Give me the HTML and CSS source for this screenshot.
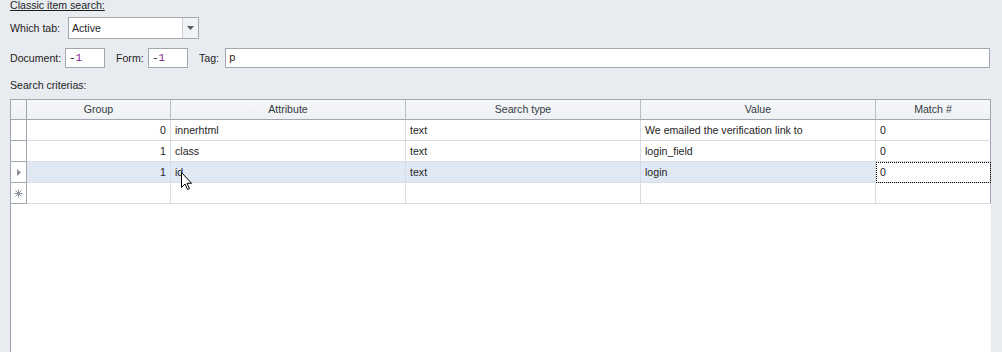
FILE: index.html
```html
<!DOCTYPE html>
<html>
<head>
<meta charset="utf-8">
<link rel="stylesheet" href="styles.css">
</head>
<body>
<div class="page">
  <div class="title">Classic item search:</div>
  <div class="row row-tab">
    <span class="lbl lbl-tab">Which tab:</span>
    <div class="combo">
      <span class="combo-text">Active</span>
      <span class="combo-btn"><svg width="7" height="4" viewBox="0 0 7 4"><path d="M0 0H7L3.5 4Z" fill="#555b63"/></svg></span>
    </div>
  </div>
  <div class="row row-fields">
    <span class="lbl lbl-doc">Document:</span>
    <div class="field f-doc"><span class="mdash">-</span><span class="num">1</span></div>
    <span class="lbl lbl-form">Form:</span>
    <div class="field f-form"><span class="mdash">-</span><span class="num">1</span></div>
    <span class="lbl lbl-tag">Tag:</span>
    <div class="field f-tag"><span class="tagv">p</span></div>
  </div>
  <div class="section">Search criterias:</div>
  <div class="grid">
    <div class="gr head">
      <div class="c ind"></div>
      <div class="c hc">Group</div>
      <div class="c hc">Attribute</div>
      <div class="c hc">Search type</div>
      <div class="c hc">Value</div>
      <div class="c hc last">Match #</div>
    </div>
    <div class="gr">
      <div class="c ind"></div>
      <div class="c num-c">0</div>
      <div class="c">innerhtml</div>
      <div class="c">text</div>
      <div class="c">We emailed the verification link to</div>
      <div class="c last">0</div>
    </div>
    <div class="gr">
      <div class="c ind"></div>
      <div class="c num-c">1</div>
      <div class="c">class</div>
      <div class="c">text</div>
      <div class="c">login_field</div>
      <div class="c last">0</div>
    </div>
    <div class="gr sel">
      <div class="c ind"><svg width="4" height="7" viewBox="0 0 4 7"><path d="M0 0L4 3.5L0 7Z" fill="#8c929b"/></svg></div>
      <div class="c num-c">1</div>
      <div class="c">id</div>
      <div class="c">text</div>
      <div class="c">login</div>
      <div class="c last focus">0</div>
    </div>
    <div class="gr">
      <div class="c ind"><svg width="9" height="9" viewBox="0 0 9 9"><path d="M4.5 0.5V8.5M0.5 4.5H8.5M1.5 1.5L7.5 7.5M7.5 1.5L1.5 7.5" stroke="#8c929b" stroke-width="1" fill="none"/></svg></div>
      <div class="c"></div>
      <div class="c"></div>
      <div class="c"></div>
      <div class="c"></div>
      <div class="c last"></div>
    </div>
    <svg class="cursor" width="12" height="19" viewBox="0 0 12 19"><path d="M0.5 0.5V15.5L4 12L6.5 17.5L8.5 16.6L6 11.3H10.5Z" fill="#fff" stroke="#000" stroke-width="1" stroke-linejoin="miter"/></svg>
  </div>
</div>
</body>
</html>
```

FILE: styles.css
```css
html, body {
  margin: 0;
  padding: 0;
  background: #e8ebf0;
  overflow: hidden;
}
body {
  font-family: "Liberation Sans", Arial, sans-serif;
  font-size: 10.6px;
  color: #1e1e1e;
  width: 1002px;
  height: 352px;
}
.page {
  padding: 0 0 0 10px;
}
.title {
  height: 12px;
  line-height: 12px;
  text-decoration: underline;
  margin-top: -1px;
}
.row {
  display: flex;
  align-items: center;
}
.row-tab {
  margin-top: 6px;
  height: 22px;
}
.lbl {
  white-space: nowrap;
  flex: 0 0 auto;
}
.lbl-tab { width: 58px; }
.combo {
  width: 129px;
  height: 20px;
  border: 1px solid #a3a7ae;
  background: #fff;
  display: flex;
  align-items: center;
}
.combo-text {
  flex: 1;
  padding-left: 3px;
}
.combo-btn {
  width: 15px;
  height: 20px;
  border-left: 1px solid #c9ccd1;
  background: #f2f3f5;
  display: flex;
  align-items: center;
  justify-content: center;
}
.row-fields {
  margin-top: 9px;
  height: 20px;
}
.field {
  flex: 0 0 auto;
  height: 18px;
  border: 1px solid #a3a7ae;
  background: #fff;
  font-family: "Liberation Mono", "Courier New", monospace;
  font-size: 11px;
  line-height: 18px;
  padding-left: 3px;
  box-sizing: content-box;
}
.lbl-doc { width: 55px; }
.f-doc { width: 35px; }
.lbl-form { margin-left: 11px; width: 32px; }
.f-form { width: 35px; }
.lbl-tag { margin-left: 11px; width: 26px; }
.f-tag { width: 760px; }
.mdash { color: #222; }
.num { color: #7a1a8a; }
.tagv { color: #3a1a10; }
.section {
  margin-top: 11px;
  height: 12px;
  line-height: 12px;
}
.grid {
  position: relative;
  margin-top: 8px;
  width: 981px;
  height: 262px;
  border: 1px solid #a1a7b1;
  border-right: 0;
  background: #fff;
  box-sizing: border-box;
}
.gr {
  display: grid;
  grid-template-columns: 16px 144px 235px 235px 235px 115px;
  height: 21px;
}
.gr.head {
  height: 20px;
  background: linear-gradient(#f6f7f9, #eef0f3);
}
.c {
  box-sizing: border-box;
  border-right: 1px solid #d9dde3;
  border-bottom: 1px solid #d9dde3;
  padding: 0 4px;
  line-height: 20px;
  white-space: nowrap;
  overflow: hidden;
}
.c.last {
  border-right: 1px solid #a1a7b1;
}
.head .c {
  border-bottom: 1px solid #a1a7b1;
  border-right-color: #b9bec6;
  text-align: center;
  color: #333a44;
  line-height: 19px;
}
.head .c.last { border-right-color: #a1a7b1; }
.c.ind {
  padding: 0;
  border-right-color: #a1a7b1;
  border-bottom-color: #a1a7b1;
  display: flex;
  align-items: center;
  justify-content: center;
  background: #fff;
}
.head .c.ind { background: linear-gradient(#f6f7f9, #eef0f3); }
.num-c { text-align: right; }
.sel .c { background: #dfe8f3; }
.sel .c.ind { background: #fff; }
.sel .c.focus {
  background: #fff;
  outline: 1px dotted #000;
  outline-offset: -1px;
}
.cursor {
  position: absolute;
  left: 170px;
  top: 72px;
}
```
